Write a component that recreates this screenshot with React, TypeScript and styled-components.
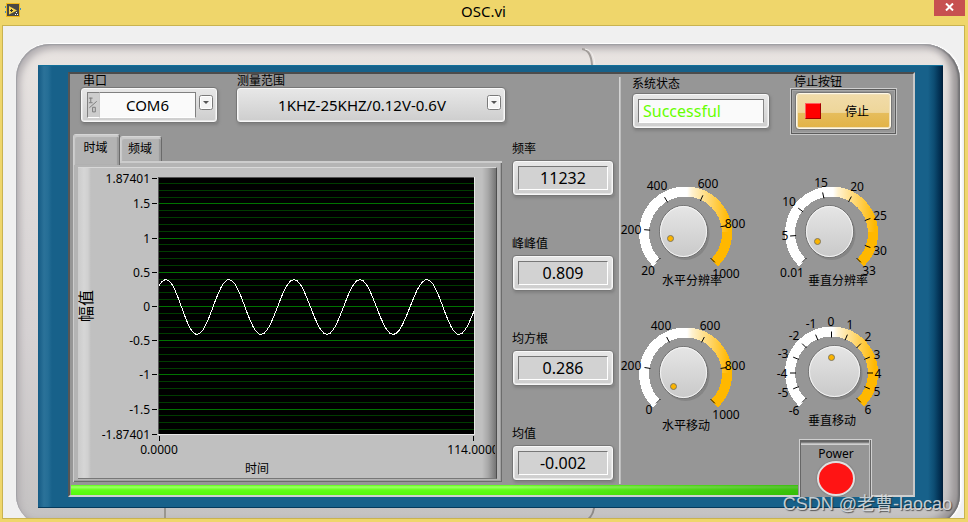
import React, { useState } from "react";
import styled, { createGlobalStyle, css } from "styled-components";

const GlobalStyle = createGlobalStyle`
  * { box-sizing: border-box; }
  html, body { margin: 0; padding: 0; }
  body, button, input, select {
    font-family: "Noto Sans", "Noto Sans CJK SC", sans-serif;
    font-size: 12px;
    color: #000;
  }
`;

const Window = styled.div`
  position: relative;
  display: flex;
  flex-direction: column;
  min-height: 100vh;
  background: #efd66b;
  padding: 0 3px 3px 2px;
  overflow: hidden;
`;

const TitleBar = styled.header`
  display: grid;
  grid-template-columns: 40px 1fr 40px;
  height: 25px;
`;

const AppIcon = styled.svg`
  display: block;
  margin: 3px 0 0 3px;
`;

const Title = styled.h1`
  margin: 0;
  font-size: 15px;
  line-height: 22px;
  font-weight: 400;
  text-align: center;
`;

const CloseButton = styled.button`
  justify-self: end;
  width: 31px;
  height: 16px;
  padding: 0 0 2px;
  border: 0;
  background: #c75050;
  display: grid;
  place-items: center;
`;

const Client = styled.main`
  flex: 1;
  border: 1px solid #c9b350;
  background: #f0f0f0;
  padding: 18px 4px 0 13px;
  overflow: hidden;
`;

const Bezel = styled.div`
  position: relative;
  border-radius: 34px 36px 30px 30px;
  padding: 21px 17px 17px 22px;
  margin-bottom: -9px;
  background: linear-gradient(180deg, #e9e4e1 0%, #e2dedd 15%, #d6d2d3 60%, #c4c2c2 100%);
  box-shadow:
    inset 1px 1px 1px #a0a0a5,
    inset -2px 0 2px #707072,
    inset 4px 5px 7px #b2aeb1,
    inset -9px -3px 7px #9b9798,
    0 -1px 1px #fff,
    2px 0 2px #fff;
`;

const Seam = styled.svg<{ $edge: "top" | "bottom"; $left: string }>`
  position: absolute;
  left: ${(p) => p.$left};
  ${(p) => (p.$edge === "top" ? "top: 4px;" : "bottom: 0;")}
`;

const BlueFrame = styled.div`
  position: relative;
  padding: 7px 28px 11px 30px;
  background: linear-gradient(90deg, #145a84 0, #2b7299 6px, #256e96 10px, #17618a 14px, #17618a calc(100% - 15px), #0d4d73 calc(100% - 9px), #00294a calc(100% - 2px), #001c36 100%);
  box-shadow: inset 0 1px 0 #12709a, inset 0 -1px 0 #043a5c;
`;

const Panel = styled.div`
  display: grid;
  grid-template-columns: 1fr 294px;
  grid-template-rows: 1fr 10px;
  border: 2px solid;
  border-color: #4c4c4c #c8c8c8 #d0d0d0 #555;
  background: #969696;
`;

const Acquisition = styled.section`
  grid-column: 1;
  grid-row: 1;
  display: flex;
  flex-direction: column;
  gap: 11px;
  padding: 0 5px 3px 3px;
`;

const Selectors = styled.div`
  display: flex;
  gap: 18px;
  padding-left: 7px;
`;

const Labelled = styled.div<{ $width: number; $gap?: number; $indent?: number }>`
  display: flex;
  flex-direction: column;
  gap: ${(p) => p.$gap ?? 0}px;
  width: ${(p) => p.$width}px;

  > label { padding-left: ${(p) => p.$indent ?? 0}px; }
`;

const Caption = styled.label`
  line-height: 13px;
  white-space: nowrap;
`;

const plate = css`
  border: 1px solid #777;
  border-radius: 4px;
  background: linear-gradient(180deg, #e8e8e8, #cdcdcd);
  box-shadow: inset 0 0 0 1px #f8f8f8, inset 0 0 0 2px #e6e6e6, 1px 2px 3px #808080;
`;

const Plate = styled.div`
  ${plate}
  position: relative;
  display: flex;
  height: 36px;
  padding: 5px;
`;

const IoPlate = styled(Plate)`
  padding: 4px 21px 4px 6px;
`;

const IoMark = styled.svg`
  flex: none;
  border: 1px solid #808080;
  border-right: 0;
  border-bottom-color: #fff;
  background: #cdcdcd;
`;

const Choice = styled.select<{ $boxed?: boolean }>`
  appearance: none;
  flex: 1;
  min-width: 0;
  padding: 0;
  border: 0;
  background: transparent;
  font-size: 15px;
  text-align-last: center;
  ${(p) =>
    p.$boxed
      ? css`
          border: 1px solid;
          border-color: #808080 #808080 #fff #c8c8c8;
          background: #fafafa;
        `
      : css`
          padding-right: 18px;
        `}
`;

const Arrow = styled.svg`
  position: absolute;
  right: 3px;
  top: 7px;
  pointer-events: none;
`;

const Workspace = styled.div`
  display: flex;
  gap: 10px;
`;

const Tabs = styled.div`
  flex: 1;
  min-width: 0;
`;

const TabList = styled.div`
  display: flex;
  align-items: flex-end;
  height: 27px;
`;

const Tab = styled.button<{ $active: boolean }>`
  position: relative;
  padding: 0 2px 2px 0;
  border: 1px solid;
  border-color: #d6d6d6 #6a6a6a transparent #cfcfcf;
  border-bottom: 0;
  border-radius: 3px 3px 0 0;
  background: #b3b3b3;
  box-shadow: inset 1px 2px 1px #cbcbcb, inset -2px 0 1px #999;
  ${(p) =>
    p.$active
      ? css`
          width: 47px;
          height: 31px;
          margin-bottom: -4px;
          padding-bottom: 7px;
          z-index: 1;
        `
      : css`
          width: 42px;
          height: 25px;
        `}
`;

const TabBody = styled.div`
  padding: 6px 5px 3px 5px;
  background: #b4b4b4;
  box-shadow: inset 1px 2px 0 #cccccc, inset -1px -1px 0 #6c6c6c, inset -2px -2px 0 #a0a0a0;
`;

const ScreenBack = styled.div`
  height: 312px;
  overflow: hidden;
  border-top: 1px solid #d8d8d8;
  border-right: 1px solid #4e4e4e;
  border-bottom: 1px solid #777;
  background: linear-gradient(90deg, #cbcbcb 0, #d6d6d6 6px, #d0d0d0 10px, #c0c0c0 13px, #c0c0c0 calc(100% - 14px), #a8a8a8 calc(100% - 8px), #747474 100%);
`;

const Chart = styled.svg`
  display: block;
  font-size: 12px;
`;

const Readings = styled.div`
  width: 102px;
  padding-top: 8px;
  display: flex;
  flex-direction: column;
  gap: 41px;
`;

const Field = styled.input<{ $status?: boolean }>`
  width: 100%;
  min-width: 0;
  padding: 0;
  border: 1px solid;
  border-color: #777 #fff #fff #777;
  background: #d2d2d2;
  font-size: 16px;
  text-align: center;
  ${(p) =>
    p.$status &&
    css`
      padding-left: 4px;
      border-right-color: #888;
      background: #fafafa;
      color: #66ff00;
      text-align: left;
    `}
`;

const Progress = styled.div`
  grid-column: 1 / 3;
  grid-row: 2;
  margin: 0 115px 0 1px;
  background:
    linear-gradient(90deg, transparent 60%, rgba(20, 130, 0, 0.5)),
    linear-gradient(180deg, #58ff10 0, #a0ff68 2px, #60ff18 5px, #54f80c 100%);
`;

const Controls = styled.section`
  grid-column: 2;
  grid-row: 1 / 3;
  position: relative;
  display: flex;
  flex-direction: column;
  padding-left: 2px;
`;

const Divider = styled.div`
  position: absolute;
  left: 0;
  top: 3px;
  bottom: 11px;
  width: 2px;
  background: linear-gradient(90deg, #d4d4d4 50%, #bdbdbd 50%);
`;

const StatusRow = styled.div`
  display: flex;
  gap: 20px;
  height: 96px;
  padding: 1px 0 0 11px;

  > :first-child { padding-top: 2px; }
`;

const StopFrame = styled.div`
  height: 47px;
  padding: 3px 4px;
  border: 1px solid;
  border-color: #d0d0d0 #c8c8c8 #c8c8c8 #d0d0d0;
  box-shadow: inset 0 0 0 1px #5c5c5c, inset 0 0 0 2px #a8a8a8;
`;

const StopButton = styled.button`
  display: flex;
  align-items: center;
  gap: 24px;
  width: 100%;
  height: 38px;
  padding: 0 0 0 9px;
  border: 1px solid #777;
  border-radius: 4px;
  background: linear-gradient(180deg, #f1dcaa 0, #eed69a 54%, #e6bd5c 56%, #e2b244 100%);
  box-shadow: inset 0 0 0 1px #fff8e6, inset 0 0 0 2px #f0e0b8;
`;

const StopMark = styled.span`
  width: 16px;
  height: 16px;
  background: #ff0000;
  border: 1px solid;
  border-color: #ff6060 #a00000 #a00000 #ff6060;
`;

const DialGrid = styled.div`
  display: grid;
  grid-template-columns: 146px 146px;
  row-gap: 21px;
`;

const DialBox = styled.div`
  position: relative;
  height: 120px;
`;

const DialArt = styled.svg`
  display: block;
  overflow: visible;
  font-size: 12px;
`;

const DialInput = styled.input`
  position: absolute;
  left: 38px;
  top: 35px;
  width: 52px;
  height: 54px;
  margin: 0;
  opacity: 0;
`;

const PowerBox = styled.div`
  margin: 8px 0 -2px 178px;
  width: 73px;
  height: 58px;
  padding: 6px 0 0 1px;
  display: flex;
  flex-direction: column;
  align-items: center;
  border: 1px solid #d0d0d0;
  border-bottom: 0;
  background: linear-gradient(180deg, #666 0, #666 2px, #a0a0a0 3px, #d0d0d0 4px, #d0d0d0 5px, #969696 5px);
  box-shadow: inset 1px 0 0 #666, inset -1px 0 0 #666, inset -2px 0 0 #c0c0c0;
`;

const PowerLabel = styled.label`
  line-height: 15px;
`;

const PowerButton = styled.button`
  width: 38px;
  height: 35px;
  padding: 0;
  border: 2px solid #e0e0e0;
  border-radius: 50%;
  background: #ff1414;
  box-shadow: 0 0 1px 1px #888;
`;

const Watermark = styled.div`
  position: absolute;
  right: 16px;
  bottom: 5px;
  font-family: "Liberation Sans", "Noto Sans CJK SC", sans-serif;
  font-size: 18px;
  line-height: 26px;
  color: rgba(225, 228, 230, 0.85);
  text-shadow: 1px 1px 1px rgba(40, 40, 40, 0.7);
  white-space: nowrap;
  pointer-events: none;
`;

function DropArrow() {
  return (
    <Arrow width="15" height="16" viewBox="0 0 15 16" aria-hidden="true">
      <rect x="0.500" y="0.500" width="13" height="14" rx="2" fill="#f4f4f4" stroke="#7a7a7a" />
      <rect x="1.500" y="1.500" width="11" height="12" rx="1" fill="none" stroke="#fff" />
      <path d="M4 6h6l-3 3z" fill="#555" />
    </Arrow>
  );
}

const SCALE = 68.4;
const ZERO_Y = 138;
const PLOT = { left: 81, top: 10, width: 315, height: 256 };
const EXTREMA = [56, 88, 119, 151, 183, 216, 249, 282, 315, 349, 381, 414];

function wavePoints() {
  const points: string[] = [];
  for (let i = 0; i < EXTREMA.length - 1; i++) {
    const from = EXTREMA[i];
    const to = EXTREMA[i + 1];
    const sign = i % 2 === 0 ? 1 : -1;
    for (let x = Math.max(from, PLOT.left); x < Math.min(to, PLOT.left + PLOT.width); x += 3) {
      const t = (x - from) / (to - from);
      points.push(`${x},${(139 + sign * 27.5 * Math.cos(Math.PI * t)).toFixed(1)}`);
    }
  }
  points.push("396,143");
  return points.join(" ");
}

const Y_TICKS = ["1.87401", "1.5", "1", "0.5", "0", "-0.5", "-1", "-1.5", "-1.87401"];

function TimeChart() {
  const minor = Array.from({ length: 37 }, (_, i) => i - 18);
  return (
    <Chart width="417" height="310" viewBox="0 0 417 310" role="img" aria-label="时域">
      <rect x={PLOT.left - 1} y={PLOT.top - 1} width={PLOT.width + 2} height={PLOT.height + 2} fill="#e8e8e8" />
      <rect x={PLOT.left - 1} y={PLOT.top - 1} width={PLOT.width + 1} height={PLOT.height + 1} fill="#555" />
      <rect x={PLOT.left} y={PLOT.top} width={PLOT.width} height={PLOT.height} fill="#000" />
      {minor.map((n) => (
        <rect
          key={n}
          x={PLOT.left}
          y={Math.round(ZERO_Y - (n * SCALE) / 10)}
          width={PLOT.width}
          height="1"
          fill={n % 5 === 0 ? "#007200" : "#003c00"}
        />
      ))}
      <polyline points={wavePoints()} fill="none" stroke="#fff" strokeWidth="1" shapeRendering="crispEdges" />
      {Y_TICKS.map((t) => {
        const y = Math.round(ZERO_Y - Number(t) * SCALE);
        return (
          <g key={t}>
            <rect x="74" y={y} width="5" height="1" fill="#000" />
            <text x="72" y={y + 5} textAnchor="end">{t}</text>
          </g>
        );
      })}
      <rect x="81" y="268" width="1" height="5" fill="#000" />
      <rect x="395" y="268" width="1" height="5" fill="#000" />
      <text x="81" y="286" textAnchor="middle">0.0000</text>
      <text x="395" y="286" textAnchor="middle">114.0000</text>
      <text x="179" y="305" textAnchor="middle">时间</text>
      <text transform="translate(14 138) rotate(-90)" textAnchor="middle" fontSize="16">幅值</text>
    </Chart>
  );
}

type Mark = [label: string, x: number, y: number];

interface DialSpec {
  id: string;
  caption: string;
  captionX: number;
  captionY: number;
  min: number;
  max: number;
  value: number;
  cy: number;
  knobX: number;
  knobRx: number;
  dot: [number, number];
  marks: Mark[];
}

const DIALS: DialSpec[] = [
  {
    id: "h-res", caption: "水平分辨率", captionX: 71, captionY: 111, min: 20, max: 1000, value: 60,
    cy: 63, knobX: 62.5, knobRx: 24, dot: [49.5, 68.5],
    marks: [["20", 27, 100], ["200", 10, 59], ["400", 36, 15], ["600", 87, 13], ["800", 114, 53], ["1000", 105, 103]],
  },
  {
    id: "v-res", caption: "垂直分辨率", captionX: 71, captionY: 111, min: 0.01, max: 33, value: 1,
    cy: 63, knobX: 62.5, knobRx: 24, dot: [50.5, 71.5],
    marks: [["0.01", 25, 102], ["5", 18, 65], ["10", 22, 31], ["15", 54, 12], ["20", 90, 16], ["25", 113, 45], ["30", 113, 80], ["33", 102, 100]],
  },
  {
    id: "h-move", caption: "水平移动", captionX: 65, captionY: 115, min: 0, max: 1000, value: 0,
    cy: 63, knobX: 62.5, knobRx: 24, dot: [52.5, 75.5],
    marks: [["0", 28, 98], ["200", 10, 54], ["400", 40, 14], ["600", 89, 14], ["800", 114, 54], ["1000", 105, 103]],
  },
  {
    id: "v-move", caption: "垂直移动", captionX: 65, captionY: 110, min: -6, max: 6, value: 0,
    cy: 62, knobX: 67.5, knobRx: 26, dot: [64.5, 46.5],
    marks: [["-6", 27, 99], ["-5", 16, 81], ["-4", 15, 62], ["-3", 16, 42], ["-2", 27, 24], ["-1", 44, 12], ["0", 64, 10], ["1", 83, 13], ["2", 101, 25], ["3", 110, 43], ["4", 111, 62], ["5", 110, 80], ["6", 101, 98]],
  },
];

const CX = 64.5;

function polar(cy: number, radius: number, degrees: number) {
  const a = (degrees * Math.PI) / 180;
  return [CX + radius * Math.sin(a), cy - radius * Math.cos(a)];
}

function Dial({ spec }: { spec: DialSpec }) {
  const { cy, min, max } = spec;
  const [x1, y1] = polar(cy, 41.5, -136);
  const [x2, y2] = polar(cy, 41.5, 136);
  return (
    <DialBox>
      <DialArt width="146" height="120" viewBox="0 0 146 120">
        <defs>
          <linearGradient id={`${spec.id}-ring`} gradientUnits="userSpaceOnUse" x1="66" y1="0" x2="108" y2="0">
            <stop offset="0" stopColor="#fff" />
            <stop offset="0.12" stopColor="#fff2d0" />
            <stop offset="1" stopColor="#ffb800" />
          </linearGradient>
          <linearGradient id={`${spec.id}-knob`} x1="0" y1="0" x2="0" y2="1">
            <stop offset="0" stopColor="#e6e6e6" />
            <stop offset="1" stopColor="#c9c9c9" />
          </linearGradient>
        </defs>
        <path
          d={`M${x1} ${y1}A41.5 41.5 0 0 1 ${CX} ${cy - 41.5}`}
          fill="none"
          stroke="#fff"
          strokeWidth="10"
          shapeRendering="crispEdges"
        />
        <path
          d={`M${CX} ${cy - 41.5}A41.5 41.5 0 0 1 ${CX + 41.5} ${cy}`}
          fill="none"
          stroke={`url(#${spec.id}-ring)`}
          strokeWidth="10"
          shapeRendering="crispEdges"
        />
        <path
          d={`M${CX + 41.5} ${cy - 1}V${cy}A41.5 41.5 0 0 1 ${x2} ${y2}`}
          fill="none"
          stroke="#ffb800"
          strokeWidth="10"
          shapeRendering="crispEdges"
        />
        {spec.marks.map(([label]) => {
          const angle = -135 + (270 * (Number(label) - min)) / (max - min);
          const [ax, ay] = polar(cy, 41.5, angle);
          const [bx, by] = polar(cy, 35.5, angle);
          return <line key={label} x1={ax} y1={ay} x2={bx} y2={by} stroke="#000" />;
        })}
        <ellipse cx={spec.knobX + 2} cy={cy + 1} rx={spec.knobRx} ry="26" fill="#858585" />
        <ellipse cx={spec.knobX} cy={cy - 1.5} rx={spec.knobRx} ry="26" fill={`url(#${spec.id}-knob)`} stroke="#6f6f6f" />
        <ellipse cx={spec.knobX} cy={cy - 1.5} rx={spec.knobRx - 1} ry="25" fill="none" stroke="#f6f6f6" />
        <circle cx={spec.dot[0]} cy={spec.dot[1]} r="3" fill="#fbb400" stroke="#807860" />
        {spec.marks.map(([label, x, y]) => (
          <text key={label} x={x} y={y + 5} textAnchor="middle">{label}</text>
        ))}
        <text id={`${spec.id}-caption`} x={spec.captionX} y={spec.captionY + 4} textAnchor="middle">{spec.caption}</text>
      </DialArt>
      <DialInput type="range" min={min} max={max} step="any" defaultValue={spec.value} aria-labelledby={`${spec.id}-caption`} />
    </DialBox>
  );
}

const READINGS = [
  { id: "freq", label: "频率", value: "11232" },
  { id: "vpp", label: "峰峰值", value: "0.809" },
  { id: "rms", label: "均方根", value: "0.286" },
  { id: "mean", label: "均值", value: "-0.002" },
];

export default function App() {
  const [tab, setTab] = useState("时域");
  return (
    <>
      <GlobalStyle />
      <Window>
        <TitleBar>
          <AppIcon width="16" height="15" viewBox="0 0 16 15" aria-hidden="true">
            <path d="M0 4h3M0 9h3M12 6h4" stroke="#3d8fc4" strokeWidth="2" />
            <rect x="1.5" y="0.5" width="13" height="13" fill="#494844" stroke="#f0b81c" />
            <path d="M4 3l8 4.500l-8 4z" fill="#f6d44c" />
            <path d="M5 7.500h3M6.500 6v3" stroke="#333" />
            <path d="M10 11.500h1M12 11.500h1M11 9.500h1" stroke="#fff" />
          </AppIcon>
          <Title>OSC.vi</Title>
          <CloseButton aria-label="关闭">
            <svg width="9" height="8" viewBox="0 0 9 8">
              <path d="M1 0.500l7 7M8 0.500l-7 7" stroke="#fff" strokeWidth="2" />
            </svg>
          </CloseButton>
        </TitleBar>
        <Client>
          <Bezel>
            <Seam $edge="top" $left="60%" width="30" height="17" viewBox="0 0 30 17" aria-hidden="true">
              <path d="M0 1q9 1 10 16" fill="none" stroke="#a29d9a" strokeWidth="2" />
              <path d="M3 1q9 1 10 16" fill="none" stroke="#f2efed" strokeWidth="1" />
            </Seam>
            <Seam $edge="bottom" $left="15%" width="12" height="17" viewBox="0 0 12 17" aria-hidden="true">
              <path d="M7 0v17" stroke="#999690" strokeWidth="2" />
            </Seam>
            <Seam $edge="bottom" $left="60%" width="24" height="17" viewBox="0 0 24 17" aria-hidden="true">
              <path d="M12 0q-1 8-7 12" fill="none" stroke="#8d8a88" strokeWidth="2" />
            </Seam>
            <BlueFrame>
              <Panel>
                <Acquisition>
                  <Selectors>
                    <Labelled $width={138} $indent={3}>
                      <Caption htmlFor="port">串口</Caption>
                      <IoPlate>
                        <IoMark width="12" height="26" viewBox="0 0 12 26" aria-hidden="true">
                          <path d="M1 5.500h4M3 5v5M1 10.500h4M9.500 9l-8 7M5 15.500h3v5h-3z" fill="none" stroke="#777" />
                        </IoMark>
                        <Choice id="port" $boxed defaultValue="COM6">
                          <option>COM6</option>
                        </Choice>
                        <DropArrow />
                      </IoPlate>
                    </Labelled>
                    <Labelled $width={270} $indent={1}>
                      <Caption htmlFor="range">测量范围</Caption>
                      <Plate>
                        <Choice id="range" defaultValue="1KHZ-25KHZ/0.12V-0.6V">
                          <option>1KHZ-25KHZ/0.12V-0.6V</option>
                        </Choice>
                        <DropArrow />
                      </Plate>
                    </Labelled>
                  </Selectors>
                  <Workspace>
                    <Tabs>
                      <TabList role="tablist">
                        {["时域", "频域"].map((name) => (
                          <Tab key={name} role="tab" aria-selected={tab === name} $active={tab === name} onClick={() => setTab(name)}>
                            {name}
                          </Tab>
                        ))}
                      </TabList>
                      <TabBody role="tabpanel">
                        <ScreenBack>
                          <TimeChart />
                        </ScreenBack>
                      </TabBody>
                    </Tabs>
                    <Readings>
                      {READINGS.map((r) => (
                        <Labelled key={r.id} $width={102} $gap={5}>
                          <Caption htmlFor={r.id}>{r.label}</Caption>
                          <Plate>
                            <Field id={r.id} readOnly value={r.value} />
                          </Plate>
                        </Labelled>
                      ))}
                    </Readings>
                  </Workspace>
                </Acquisition>
                <Progress role="progressbar" aria-label="进度" aria-valuenow={100} />
                <Controls>
                  <Divider />
                  <StatusRow>
                    <Labelled $width={138} $gap={3}>
                      <Caption htmlFor="status">系统状态</Caption>
                      <Plate>
                        <Field id="status" $status readOnly value="Successful" />
                      </Plate>
                    </Labelled>
                    <Labelled $width={107} $indent={4}>
                      <Caption htmlFor="stop">停止按钮</Caption>
                      <StopFrame>
                        <StopButton id="stop">
                          <StopMark />
                          停止
                        </StopButton>
                      </StopFrame>
                    </Labelled>
                  </StatusRow>
                  <DialGrid>
                    {DIALS.map((d) => (
                      <Dial key={d.id} spec={d} />
                    ))}
                  </DialGrid>
                  <PowerBox>
                    <PowerLabel htmlFor="power">Power</PowerLabel>
                    <PowerButton id="power" />
                  </PowerBox>
                </Controls>
              </Panel>
            </BlueFrame>
          </Bezel>
        </Client>
        <Watermark>CSDN @老曹-laocao</Watermark>
      </Window>
    </>
  );
}
